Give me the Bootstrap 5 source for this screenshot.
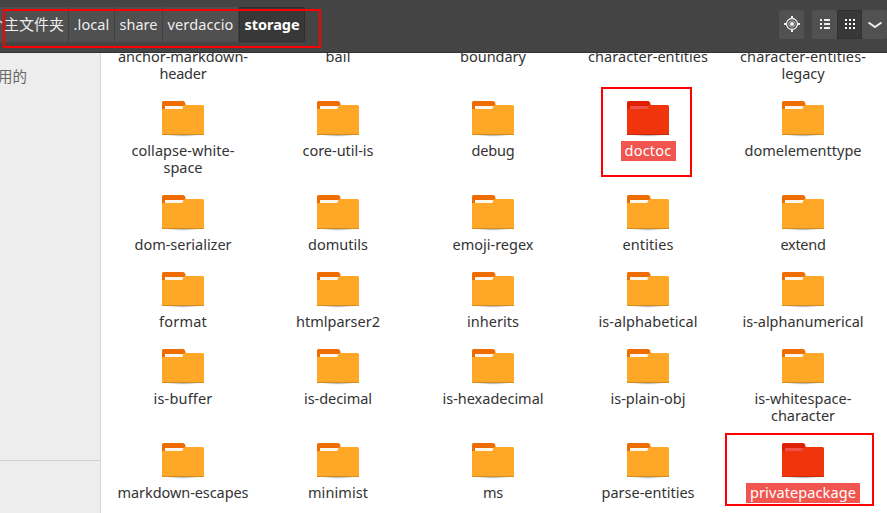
<!DOCTYPE html>
<html lang="zh-CN">
<head>
<meta charset="utf-8">
<title>storage</title>
<link href="https://cdn.jsdelivr.net/npm/bootstrap@5.3.0/dist/css/bootstrap.min.css" rel="stylesheet">
<style>
body{width:887px;height:513px;font-family:"Noto Sans","Noto Sans CJK SC",sans-serif;font-size:14.5px;line-height:17px;color:#333;background:#fff}
.topbar{height:53px;background:#444;border-bottom:1px solid #333}
.crumbs{height:35px;margin-top:7px}
.crumb{background:#505050;color:#eee;border-right:1px solid #404040;white-space:nowrap;padding-bottom:1px}
.crumb.current{background:#383838;color:#fff;font-weight:700;border:1px solid #2e2e2e;border-radius:0 2px 2px 0}
.w-home{width:69px;font-size:15px}.w-local{width:46px}.w-share{width:48px}.w-verd{width:76px}.w-stor{width:66px}
.w-home svg{margin-right:1px}
.tools{margin-top:10px;height:29px}
.tool{height:29px;background:#515151;border-radius:2px}
.tool.on{background:#383838;border:1px solid #303030;border-radius:0}
.side{width:101px;background:#ededed;border-right:1px solid #d3d3d3;color:#666}
.side-top{height:408px;border-bottom:1px solid #d3d3d3;padding-top:15px;font-size:14.5px}
.side-top span{display:block;margin-left:-2px}
.files{padding-left:4.5px;margin-top:-5px;display:grid;grid-template-columns:repeat(5,155px);row-gap:19px}
.file svg{display:block;width:42px;height:36px;margin-bottom:5px}
.tag{display:block;white-space:nowrap}
.picked .tag{background:#f15550;color:#fff;margin:-1px 0 -2px;line-height:19px;padding:0 4px 1px}
.frame{position:absolute;border:2px solid #f00;pointer-events:none}
.f1{left:3px;top:9px;width:318px;height:39px}
.f2{left:601px;top:87px;width:91px;height:90px}
.f3{left:725px;top:433px;width:149px;height:73px}
</style>
<script src="https://cdn.jsdelivr.net/npm/bootstrap@5.3.0/dist/js/bootstrap.bundle.min.js"></script>
</head>
<body class="position-relative overflow-hidden d-flex flex-column">
<svg width="0" height="0" class="position-absolute">
<defs>
<radialGradient id="shade"><stop offset="0" stop-color="#000" stop-opacity=".35"/><stop offset="1" stop-color="#000" stop-opacity="0"/></radialGradient>
<symbol id="folder" viewBox="0 0 42 36"><ellipse cx="21" cy="34" rx="17" ry="1.8" fill="url(#shade)"/><path d="M0 10V1.5Q0 0 1.5 0H21Q22.500 0 23 1.500L24 5V12H0z" fill="#ef6c00"/><path d="M3 5H24V10H3z" fill="#fff8ee"/><path d="M0 8H19.500Q20.500 8 21 6.500L21.500 5Q22 4 23.500 4H40.500Q42 4 42 5.500V34H0z" fill="#ffa726"/><path d="M0 33H42V34H0z" fill="#d78c20"/></symbol>
<symbol id="folder-picked" viewBox="0 0 42 36"><ellipse cx="21" cy="34" rx="17" ry="1.8" fill="url(#shade)"/><path d="M0 10V1.5Q0 0 1.5 0H21Q22.500 0 23 1.500L24 5V12H0z" fill="#df2000"/><path d="M3 5H24V10H3z" fill="#f05048"/><path d="M0 8H19.500Q20.500 8 21 6.500L21.500 5Q22 4 23.500 4H40.500Q42 4 42 5.500V34H0z" fill="#f0340b"/><path d="M0 33H42V34H0z" fill="#c92a08"/></symbol>
</defs></svg>
<header class="topbar d-flex justify-content-between flex-shrink-0">
<nav class="crumbs d-flex">
<div class="crumb w-home d-flex align-items-center"><svg width="3" height="16" viewBox="0 0 3 16"><path d="M0 5L2 7" stroke="#ddd" stroke-width="1.500"/></svg>主文件夹</div>
<div class="crumb w-local d-flex align-items-center justify-content-center"><span class="fit" data-w="36">.local</span></div>
<div class="crumb w-share d-flex align-items-center justify-content-center"><span class="fit" data-w="38">share</span></div>
<div class="crumb w-verd d-flex align-items-center justify-content-center"><span class="fit" data-w="66">verdaccio</span></div>
<div class="crumb current w-stor d-flex align-items-center justify-content-center"><span class="fit" data-w="55">storage</span></div>
</nav>
<div class="tools d-flex">
<div class="tool me-2"><svg width="25" height="29" viewBox="0 0 25 29" fill="none" stroke="#eee"><circle cx="13" cy="14" r="5.500" stroke-width="1.300"/><circle cx="13" cy="14" r="3.200" stroke="#aaa"/><circle cx="13" cy="14" r="2" fill="#eee" stroke="none"/><path d="M13 6v3M13 19v3M5 14h3M18 14h3" stroke-width="2"/></svg></div>
<div class="tool"><svg width="25" height="29" viewBox="0 0 25 29" fill="#eee"><path d="M8 9h2v2H8zM12 9h6v2h-6zM8 13h2v2H8zM12 13h6v2h-6zM8 17h2v2H8zM12 17h6v2h-6z"/></svg></div>
<div class="tool on"><svg width="23" height="27" viewBox="1 1 23 27" fill="#fff"><path d="M8 9h2v2H8zM12 9h2v2h-2zM16 9h2v2h-2zM8 13h2v2H8zM12 13h2v2h-2zM16 13h2v2h-2zM8 17h2v2H8zM12 17h2v2h-2zM16 17h2v2h-2z"/></svg></div>
<div class="tool"><svg width="25" height="29" viewBox="0 0 25 29" fill="none" stroke="#eee" stroke-width="2"><path d="M6.500 12.500L13 17L19.500 12.500"/></svg></div>
</div>
</header>
<div class="d-flex flex-grow-1 overflow-hidden">
<aside class="side flex-shrink-0 overflow-hidden"><div class="side-top"><span>用的</span></div></aside>
<main class="flex-grow-1 overflow-hidden"><div class="files" id="files"></div></main>
</div>
<div class="frame f1"></div><div class="frame f2"></div><div class="frame f3"></div>
<script>
// Each entry: label lines with their widths; "*" marks a selected folder.
const rows=[
["anchor-markdown-:130|header:47","bail:25","boundary:66","character-entities:120","character-entities-:126|legacy:43"],
["collapse-white-:103|space:39","core-util-is:71","debug:43","*doctoc:47","domelementtype:117"],
["dom-serializer:97","domutils:60","emoji-regex:81","entities:51","extend:45"],
["format:48","htmlparser2:84","inherits:52","is-alphabetical:99","is-alphanumerical:121"],
["is-buffer:59","is-decimal:68","is-hexadecimal:101","is-plain-obj:75","is-whitespace-:97|character:64"],
["markdown-escapes:131","minimist:60","ms:20","parse-entities:93","*privatepackage:106"]];
document.getElementById("files").innerHTML=rows.map((r,i)=>r.map(s=>{
const on=s[0]==="*";if(on)s=s.slice(1);
const icon=i?`<svg><use href="#folder${on?"-picked":""}"/></svg>`:"";
return `<div class="file d-flex flex-column align-items-center ${on?"picked":""}">${icon}${s.split("|").map(l=>{const [t,w]=l.split(":");return `<span class="tag"><span class="fit" data-w="${w}">${t}</span></span>`}).join("")}</div>`}).join("")).join("");
// Even out the tracking so that each label keeps its nominal width.
document.querySelectorAll(".fit").forEach(e=>{
const n=e.textContent.length,d=(e.dataset.w-e.getBoundingClientRect().width)/n;
e.style.letterSpacing=d+"px";});
</script>
</body>
</html>
